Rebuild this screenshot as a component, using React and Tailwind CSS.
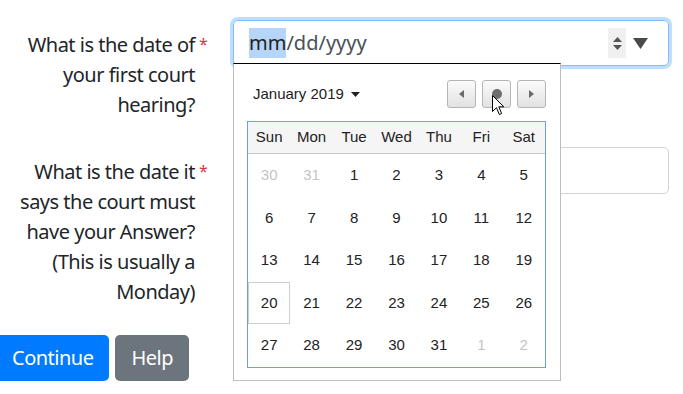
import React from "react"

const labelFont = { fontFamily: '"Noto Sans", "Open Sans", sans-serif' };
const calFont = { fontFamily: '"Liberation Sans", Arial, sans-serif' };

const weekDays = ["Sun", "Mon", "Tue", "Wed", "Thu", "Fri", "Sat"];

const days = [
  { d: 30, muted: true },
  { d: 31, muted: true },
  ...Array.from({ length: 31 }, (_, i) => ({ d: i + 1 })),
  { d: 1, muted: true },
  { d: 2, muted: true }
];

const Label = ({ lines, pt }) => (
  <div className={ `w-[233px] shrink-0 flex justify-end pr-[26px] text-[20px] leading-[30px] text-[#212529] ${ pt }` }>
    <div className="text-right tracking-[-0.5px]">
      { lines.map(l => <div key={ l }>{ l }</div>) }
    </div>
    <span className="w-[12px] pl-[4px] text-[16px] leading-[28px] text-[#dc3545]">*</span>
  </div>
)

const NavButton = ({ children }) => (
  <div className={ `
      w-[29px] h-[28px] flex items-center justify-center rounded-[3px]
      border border-[#b5b5b5] bg-gradient-to-b from-[#fbfbfb] to-[#e2e2e2]
    ` }
  >
    { children }
  </div>
)

const Calendar = () => (
  <div style={ calFont }
    className={ `
      absolute left-[233px] top-[63px] w-[328px] h-[318px] bg-white
      border border-[#bdbdbd] border-t-black pl-[13px] pr-[14px]
    ` }
  >
    <div className="mt-[16px] h-[28px] flex items-center justify-between">
      <div className="pl-[6px] flex items-center text-[15px] text-[#222]">
        January 2019
        <svg width="9" height="5" viewBox="0 0 9 5" className="ml-[7px] mt-[1px]">
          <path d="M0 0 L9 0 L4.5 5 Z" fill="#222" />
        </svg>
      </div>
      <div className="flex gap-[6px]">
        <NavButton>
          <svg width="5" height="8" viewBox="0 0 5 8"><path d="M5 0 L5 8 L0 4 Z" fill="#6a6a6a" /></svg>
        </NavButton>
        <NavButton>
          <span className="w-[10px] h-[10px] rounded-full bg-[#6e6e6e]" />
        </NavButton>
        <NavButton>
          <svg width="5" height="8" viewBox="0 0 5 8"><path d="M0 0 L0 8 L5 4 Z" fill="#6a6a6a" /></svg>
        </NavButton>
      </div>
    </div>

    <div className="mt-[13px] border border-[#6d9eeb]">
      <div className="grid grid-cols-7 h-[32px] bg-[#f5f5f5] border-b border-[#c8c8c8] text-[15px] text-[#222]">
        { weekDays.map(w => (
          <div key={ w } className="flex items-center justify-center">{ w }</div>
        )) }
      </div>
      <div className="grid grid-cols-7">
        { days.map((day, i) => (
          <div key={ i }
            className={ `
              h-[42.5px] flex items-center justify-center text-[15px]
              ${ day.muted ? "text-[#c4c4c4]" : "text-[#222]" }
              ${ i === 21 ? "border border-[#cfcfcf]" : "" }
            ` }
          >
            { day.d }
          </div>
        )) }
      </div>
    </div>

    <svg width="13" height="21" viewBox="0 0 13 21" className="absolute left-[258px] top-[31px]">
      <path d="M0.5 0.5 L0.5 16.5 L4.5 12.7 L7.3 19.5 L9.6 18.5 L6.8 11.8 L11.8 11.8 Z"
        fill="white" stroke="black" strokeWidth="1" strokeLinejoin="round" />
    </svg>
  </div>
)

const App = () => {
  return (
    <div style={ labelFont } className="relative w-[683px] h-[394px] overflow-hidden bg-white">
      <div className="pt-[20px] pr-[14px] flex flex-col">
        <div className="flex items-start">
          <Label pt="pt-[10px]" lines={ ["What is the date of", "your first court", "hearing?"] } />
          <div className={ `
              flex-1 h-[46px] rounded-[5px] border border-[#80bdff]
              shadow-[0_0_0_3px_rgba(0,123,255,0.25)] flex items-center pl-[15px] pr-[20px]
            ` }
          >
            <div className="flex-1 flex items-center text-[20px] text-[#495057]">
              <span className="bg-[#b5d5fb] text-[#222] leading-[30px]">mm</span>
              <span className="leading-[30px]">/dd/yyyy</span>
            </div>
            <div className="w-[18px] h-[30px] bg-[#f0f0f0] flex flex-col items-center justify-center gap-[3px]">
              <svg width="9" height="5" viewBox="0 0 9 5"><path d="M0 5 L9 5 L4.5 0 Z" fill="#555" /></svg>
              <svg width="9" height="5" viewBox="0 0 9 5"><path d="M0 0 L9 0 L4.5 5 Z" fill="#555" /></svg>
            </div>
            <svg width="15" height="11" viewBox="0 0 15 11" className="ml-[7px]">
              <path d="M0 0 L15 0 L7.5 11 Z" fill="#4a4a4a" />
            </svg>
          </div>
        </div>

        <div className="flex items-start mt-[27px]">
          <Label pt="pt-[10px]"
            lines={ ["What is the date it", "says the court must", "have your Answer?", "(This is usually a", "Monday)"] } />
          <div className="flex-1 h-[47px] rounded-[5px] border border-[#ced4da]" />
        </div>

        <div className="flex gap-[6px] mt-[28px] ml-[-4px] tracking-[-0.5px]">
          <button className="h-[46px] px-[16px] rounded-[5px] bg-[#007bff] text-white text-[20px]">
            Continue
          </button>
          <button className="h-[46px] px-[16px] rounded-[5px] bg-[#6c757d] text-white text-[20px]">
            Help
          </button>
        </div>
      </div>

      <Calendar />
    </div>
  )
}

export default App;
